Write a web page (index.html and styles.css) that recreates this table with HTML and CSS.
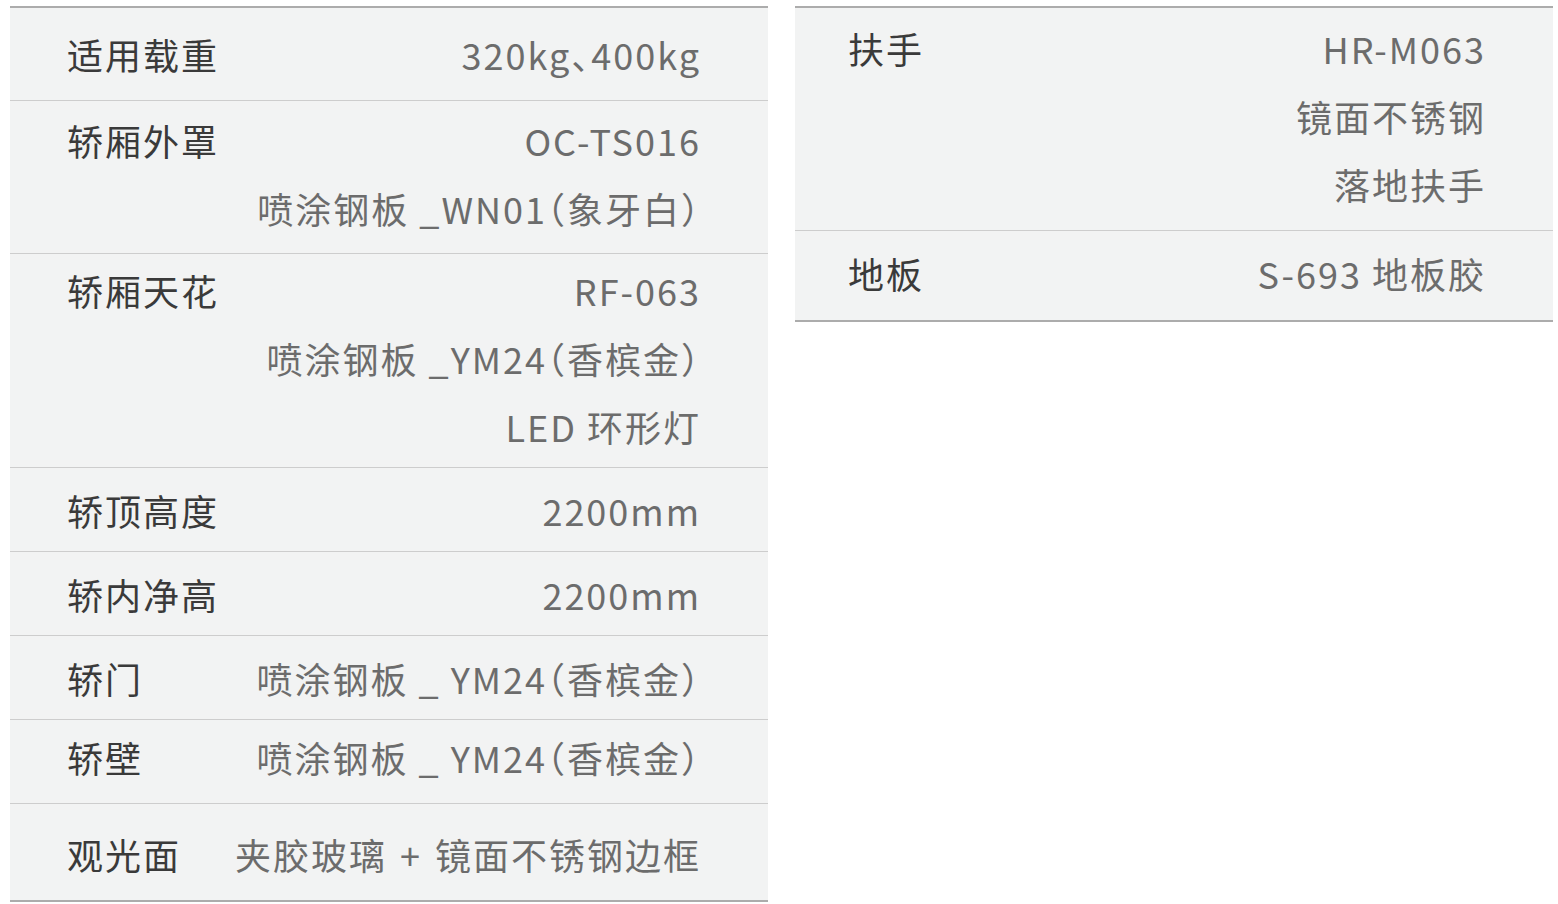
FILE: index.html
```html
<!DOCTYPE html>
<html lang="zh-CN">
<head>
<meta charset="utf-8">
<link rel="stylesheet" href="styles.css">
</head>
<body>
<div class="page">
  <div class="table">
    <div class="row h93"><div class="line"><div class="label">适用载重</div><div class="value"><div>320kg、400kg</div></div></div></div>
    <div class="row h153 up3"><div class="line"><div class="label">轿厢外罩</div><div class="value"><div>OC-TS016</div><div>喷涂钢板 _WN01（象牙白）</div></div></div></div>
    <div class="row h214 up3"><div class="line"><div class="label">轿厢天花</div><div class="value"><div>RF-063</div><div>喷涂钢板 _YM24（香槟金）</div><div>LED 环形灯</div></div></div></div>
    <div class="row h84"><div class="line"><div class="label">轿顶高度</div><div class="value"><div>2200mm</div></div></div></div>
    <div class="row h84"><div class="line"><div class="label">轿内净高</div><div class="value"><div>2200mm</div></div></div></div>
    <div class="row h84"><div class="line"><div class="label">轿门</div><div class="value"><div>喷涂钢板 _ YM24（香槟金）</div></div></div></div>
    <div class="row h84 up5"><div class="line"><div class="label">轿壁</div><div class="value"><div>喷涂钢板 _ YM24（香槟金）</div></div></div></div>
    <div class="row h96 last down2"><div class="line"><div class="label">观光面</div><div class="value wide"><div>夹胶玻璃 + 镜面不锈钢边框</div></div></div></div>
  </div>
  <div class="table right">
    <div class="row h223 up3"><div class="line"><div class="label">扶手</div><div class="value"><div>HR-M063</div><div>镜面不锈钢</div><div>落地扶手</div></div></div></div>
    <div class="row h89 last up3"><div class="line"><div class="label">地板</div><div class="value"><div>S-693 地板胶</div></div></div></div>
  </div>
</div>
</body>
</html>
```

FILE: styles.css
```css
html, body {
  margin: 0;
  padding: 0;
  background: #ffffff;
}

.page {
  display: flex;
  align-items: flex-start;
  gap: 27px;
  padding: 6px 0 0 10px;
  font-family: "Noto Sans CJK SC", "Noto Sans", sans-serif;
  font-size: 36px;
  letter-spacing: 2px;
}

.table {
  width: 758px;
  border-top: 2px solid #acacac;
  background: #f2f3f3;
}

.row {
  box-sizing: border-box;
  display: flex;
  align-items: center;
  padding: 0 67px 0 57px;
  border-bottom: 1px solid #cdcdcd;
}

.row.last {
  border-bottom: 2px solid #acacac;
}

.right .row {
  padding-left: 53px;
}

.up3 { padding-bottom: 6px; }
.up5 { padding-bottom: 10px; }
.down2 { padding-top: 4px; }

.line {
  flex: 1;
  display: flex;
  align-items: baseline;
  justify-content: space-between;
  line-height: 68px;
  white-space: nowrap;
}

.label {
  color: #3a3a3a;
}

.value {
  color: #6c6c6c;
  text-align: right;
  font-feature-settings: "halt" 1;
}

.value.wide {
  word-spacing: 3px;
}

.h93 { height: 93px; }
.h153 { height: 153px; }
.h214 { height: 214px; }
.h84 { height: 84px; }
.h96 { height: 98px; }
.h223 { height: 223px; }
.h89 { height: 91px; }
```
